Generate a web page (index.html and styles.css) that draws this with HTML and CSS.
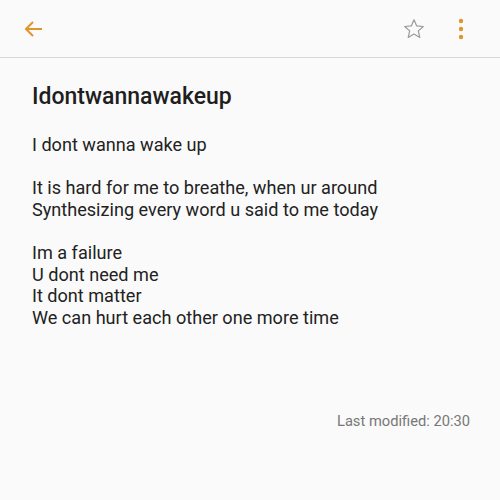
FILE: index.html
```html
<!DOCTYPE html>
<html>
<head>
<meta charset="utf-8">
<link rel="stylesheet" href="styles.css">
</head>
<body>
<div class="app">
  <header class="toolbar">
    <button class="icon back" aria-label="Back">
      <svg width="24" height="24" viewBox="0 0 24 24"><path d="M20 12H4.5M11 5l-7 7 7 7" fill="none" stroke="#e0952c" stroke-width="2" stroke-linecap="butt"/></svg>
    </button>
    <div class="spacer"></div>
    <button class="icon star" aria-label="Favourite">
      <svg width="24" height="24" viewBox="0 0 24 24"><path d="M12 2.8l2.7 6.1 6.6.6-5 4.4 1.5 6.5L12 17l-5.8 3.4 1.5-6.5-5-4.4 6.6-.6z" fill="none" stroke="#9a9a9a" stroke-width="1.2" stroke-linejoin="round"/></svg>
    </button>
    <button class="icon more" aria-label="More">
      <svg width="8" height="24" viewBox="0 0 8 24"><circle cx="4" cy="4" r="2.2" fill="#e0952c"/><circle cx="4" cy="12" r="2.2" fill="#e0952c"/><circle cx="4" cy="20" r="2.2" fill="#e0952c"/></svg>
    </button>
  </header>
  <main class="note">
    <h1 class="title">Idontwannawakeup</h1>
    <div class="body">
      <p>I dont wanna wake up</p>
      <p>It is hard for me to breathe, when ur around<br>Synthesizing every word u said to me today</p>
      <p>Im a failure<br>U dont need me<br>It dont matter<br>We can hurt each other one more time</p>
    </div>
    <div class="modified">Last modified: 20:30</div>
  </main>
</div>
</body>
</html>
```
FILE: styles.css
```css
html, body {
  margin: 0;
  padding: 0;
  background: #fafafa;
}
body {
  font-family: Roboto, "Liberation Sans", sans-serif;
  color: #222222;
}
.app {
  width: 500px;
  height: 500px;
  display: flex;
  flex-direction: column;
}
.toolbar {
  height: 58px;
  display: flex;
  align-items: center;
  border-bottom: 1px solid #d9d9d9;
  box-sizing: border-box;
  padding: 0 35px 0 22px;
}
.icon {
  border: none;
  background: none;
  padding: 0;
  display: flex;
  align-items: center;
  justify-content: center;
}
.spacer { flex: 1; }
.star { margin-right: 31px; }
.note {
  padding: 24px 32px 0 32px;
  display: flex;
  flex-direction: column;
}
.title {
  margin: 0;
  font-size: 23px;
  font-weight: 500;
  line-height: 30px;
  color: #1e1e1e;
}
.body {
  margin-top: 22px;
  font-size: 18.1px;
  line-height: 21.6px;
}
.body p {
  margin: 0 0 21.6px 0;
}
.modified {
  margin-top: 62px;
  align-self: flex-end;
  margin-right: -2px;
  font-size: 14.7px;
  color: #777777;
}
```
